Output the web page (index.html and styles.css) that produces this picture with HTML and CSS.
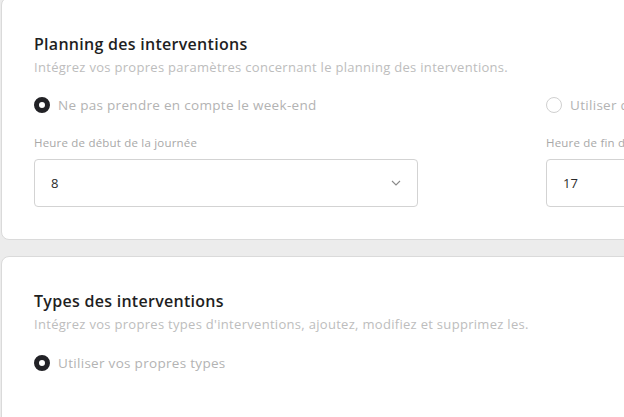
FILE: index.html
```html
<!DOCTYPE html>
<html lang="fr">
<head>
<meta charset="utf-8">
<title>Paramètres</title>
<link rel="stylesheet" href="styles.css">
</head>
<body>
<div class="page">
  <section class="card card-first">
    <h2 class="card-title">Planning des interventions</h2>
    <p class="card-sub">Intégrez vos propres paramètres concernant le planning des interventions.</p>
    <div class="grid">
      <label class="radio"><span class="dot dot-on"></span><span>Ne pas prendre en compte le week-end</span></label>
      <label class="radio"><span class="dot"></span><span>Utiliser des jours personnalisés</span></label>
      <div class="field">
        <div class="field-label">Heure de début de la journée</div>
        <div class="select"><span>8</span>
          <svg class="chev" width="10" height="6" viewBox="0 0 10 6"><path d="M1 1l4 4 4-4" fill="none" stroke="#8a8a8a" stroke-width="1.1"/></svg>
        </div>
      </div>
      <div class="field">
        <div class="field-label">Heure de fin de la journée</div>
        <div class="select"><span>17</span>
          <svg class="chev" width="10" height="6" viewBox="0 0 10 6"><path d="M1 1l4 4 4-4" fill="none" stroke="#8a8a8a" stroke-width="1.1"/></svg>
        </div>
      </div>
    </div>
  </section>
  <section class="card card-second">
    <h2 class="card-title">Types des interventions</h2>
    <p class="card-sub">Intégrez vos propres types d'interventions, ajoutez, modifiez et supprimez les.</p>
    <label class="radio"><span class="dot dot-on"></span><span>Utiliser vos propres types</span></label>
  </section>
</div>
</body>
</html>
```
FILE: styles.css
```css
html, body {
  margin: 0;
  padding: 0;
}
body {
  background: #ececec;
  font-family: "Open Sans", "Liberation Sans", sans-serif;
  overflow: hidden;
  width: 624px;
  height: 417px;
}
.page {
  display: flex;
  flex-direction: column;
  gap: 16px;
  padding-left: 1px;
  margin-top: -3px;
  width: 760px;
}
.card {
  background: #fff;
  border: 1px solid #dadada;
  border-radius: 8px;
  padding: 34px 32px 32px;
}
.card-second {
  padding-top: 32px;
  height: 200px;
}
.card-title {
  margin: 0 0 1px;
  font-size: 16px;
  line-height: 24px;
  font-weight: 600;
  letter-spacing: 0.28px;
  color: #1f1f1f;
}
.card-sub {
  margin: 0;
  font-size: 13px;
  line-height: 20px;
  letter-spacing: 0.3px;
  color: #bdbdbd;
}
.grid {
  display: grid;
  grid-template-columns: 384px 384px;
  column-gap: 128px;
  margin-top: 18px;
}
.radio {
  display: flex;
  align-items: center;
  gap: 8px;
  font-size: 13.5px;
  line-height: 20px;
  letter-spacing: 0.3px;
  color: #b3b3b3;
  white-space: nowrap;
}
.card-second .radio {
  margin-top: 19px;
}
.dot {
  width: 16px;
  height: 16px;
  box-sizing: border-box;
  border-radius: 50%;
  border: 1px solid #d0d0d0;
  background: #fff;
  flex: none;
}
.dot-on {
  border: 5px solid #222226;
}
.field {
  margin-top: 20px;
}
.field-label {
  font-size: 11.5px;
  line-height: 16px;
  letter-spacing: 0.2px;
  color: #a8a8a8;
  white-space: nowrap;
}
.select {
  margin-top: 8px;
  height: 48px;
  box-sizing: border-box;
  border: 1px solid #d3d3d3;
  border-radius: 4px;
  display: flex;
  align-items: center;
  justify-content: space-between;
  padding: 0 16px;
  font-size: 13px;
  color: #2a2a2a;
}
```
